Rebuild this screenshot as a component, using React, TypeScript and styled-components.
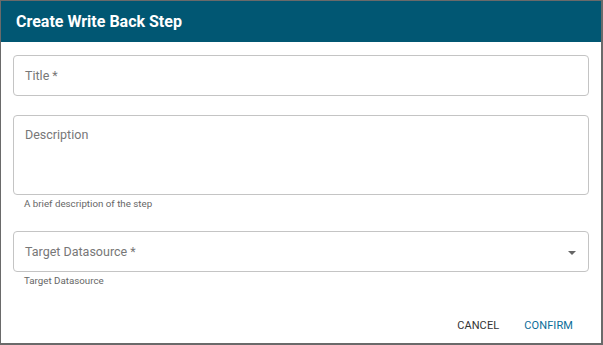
import React from "react";
import styled, { createGlobalStyle } from "styled-components";

const Global = createGlobalStyle`
  html, body { margin: 0; padding: 0; background: #6a6a6a; }
  body { font-family: Roboto, "Liberation Sans", sans-serif; }
  #root { width: 603px; height: 345px; display: flex; align-items: flex-start; }
`;

const Dialog = styled.div`
  margin: 1px 0 0 1px;
  width: 600px;
  height: 342px;
  flex-shrink: 0;
  background: #fff;
  display: flex;
  flex-direction: column;
`;

const Header = styled.div`
  height: 41px;
  background: #015773;
  color: #fff;
  display: flex;
  align-items: center;
  padding: 0 15px;
  font-size: 16px;
  font-weight: 700;
`;

const Body = styled.div`
  padding: 13px 12px 0 12px;
  display: flex;
  flex-direction: column;
  flex: 1;
`;

const Field = styled.div<{ $mb: number }>`
  display: flex;
  flex-direction: column;
  margin-bottom: ${(p) => p.$mb}px;
`;

const Box = styled.div<{ $h: number; $top?: boolean }>`
  box-sizing: border-box;
  height: ${(p) => p.$h}px;
  border: 1px solid #c4c4c4;
  border-radius: 4px;
  display: flex;
  align-items: ${(p) => (p.$top ? "flex-start" : "center")};
  padding: ${(p) => (p.$top ? "12px 11px" : "0 11px")};
  justify-content: space-between;
`;

const Label = styled.span`
  color: #777;
  font-size: 12.5px;
  line-height: 14px;
`;

const Helper = styled.span`
  color: #666;
  font-size: 9.75px;
  line-height: 12px;
  margin: 3px 0 0 11px;
`;

const Caret = styled.span`
  width: 0;
  height: 0;
  border-left: 4px solid transparent;
  border-right: 4px solid transparent;
  border-top: 4px solid #666;
  margin-right: 1px;
  margin-top: 2px;
`;

const Actions = styled.div`
  margin-top: auto;
  display: flex;
  justify-content: flex-end;
  gap: 25px;
  padding: 0 16px 11px 0;
`;

const Button = styled.span<{ $primary?: boolean }>`
  font-size: 11px;
  font-weight: 400;
  letter-spacing: 0.1px;
  color: ${(p) => (p.$primary ? "#0a6d99" : "#333")};
`;

export default function App() {
  return (
    <>
      <Global />
      <Dialog>
        <Header>Create Write Back Step</Header>
        <Body>
          <Field $mb={19}>
            <Box $h={41}>
              <Label>Title *</Label>
            </Box>
          </Field>
          <Field $mb={21}>
            <Box $h={80} $top>
              <Label>Description</Label>
            </Box>
            <Helper>A brief description of the step</Helper>
          </Field>
          <Field $mb={0}>
            <Box $h={41}>
              <Label>Target Datasource *</Label>
              <Caret />
            </Box>
            <Helper>Target Datasource</Helper>
          </Field>
          <Actions>
            <Button>CANCEL</Button>
            <Button $primary>CONFIRM</Button>
          </Actions>
        </Body>
      </Dialog>
    </>
  );
}
